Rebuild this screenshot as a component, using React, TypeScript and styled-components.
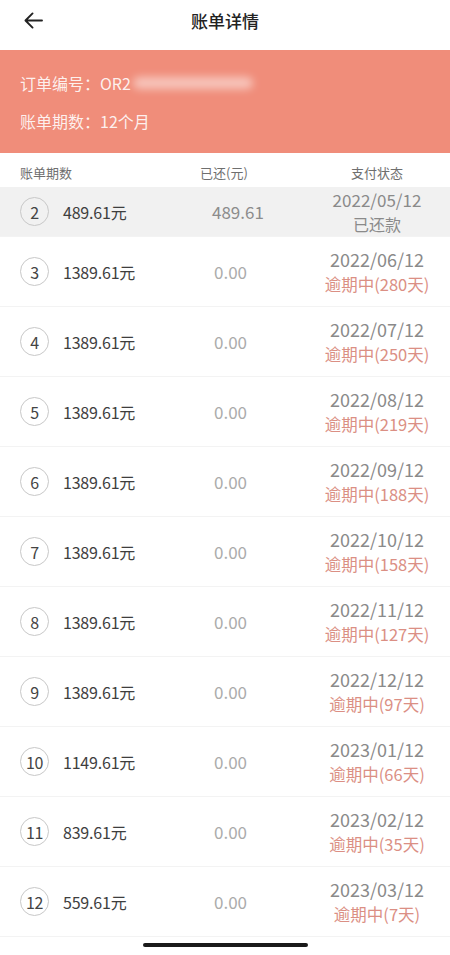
import React from "react";
import styled, { createGlobalStyle } from "styled-components";

const GlobalStyle = createGlobalStyle`
  html, body {
    margin: 0;
    padding: 0;
    background: #ffffff;
  }
  body {
    font-family: "Noto Sans CJK SC", "Noto Sans", sans-serif;
  }
`;

const Page = styled.div`
  width: 450px;
  height: 955px;
  display: flex;
  flex-direction: column;
  overflow: hidden;
  background: #ffffff;
`;

const NavBar = styled.div`
  height: 50px;
  display: grid;
  grid-template-columns: 60px 1fr 60px;
  align-items: center;
  padding-bottom: 10px;
  box-sizing: border-box;
`;

const BackButton = styled.div`
  display: flex;
  align-items: center;
  padding-left: 24px;
  color: #222;
`;

const Title = styled.div`
  text-align: center;
  font-size: 17px;
  font-weight: 500;
  color: #222;
`;

const Banner = styled.div`
  height: 103px;
  background: #f08d7a;
  display: flex;
  flex-direction: column;
  justify-content: center;
  gap: 16px;
  padding: 0 20px;
  box-sizing: border-box;
`;

const BannerLine = styled.div`
  font-size: 16px;
  color: rgba(255, 255, 255, 0.88);
  display: flex;
  align-items: center;
  height: 22px;
`;

const Blurred = styled.span`
  display: inline-block;
  width: 120px;
  height: 12px;
  margin-left: 2px;
  background: rgba(255, 255, 255, 0.5);
  filter: blur(4px);
  border-radius: 6px;
`;

const Columns = styled.div`
  display: grid;
  grid-template-columns: 180px 1fr 118px;
  align-items: center;
  height: 34px;
  padding: 4px 14px 0 20px;
  font-size: 13px;
  color: #6f6f6f;
  box-sizing: border-box;
`;

const StatusHead = styled.div`
  text-align: center;
`;

const Viewport = styled.div`
  flex: 1;
  overflow: hidden;
  position: relative;
`;

const Row = styled.div<{ $paid?: boolean }>`
  height: ${(p) => (p.$paid ? "50px" : "70px")};
  display: grid;
  grid-template-columns: 180px 1fr 118px;
  align-items: center;
  padding: 0 14px 0 20px;
  box-sizing: border-box;
  background: ${(p) => (p.$paid ? "#f1f1f1" : "#ffffff")};
  border-bottom: 1px solid #f3f3f3;
`;

const Period = styled.div`
  display: flex;
  align-items: center;
  gap: 14px;
`;

const Badge = styled.div`
  width: 29px;
  height: 29px;
  border-radius: 50%;
  border: 1px solid #c8c8c8;
  box-sizing: border-box;
  display: flex;
  align-items: center;
  justify-content: center;
  font-size: 16px;
  color: #444;
  letter-spacing: -0.5px;
`;

const Amount = styled.div`
  font-size: 16px;
  color: #3e3e3e;
  letter-spacing: -0.2px;
`;

const Repaid = styled.div<{ $paid?: boolean }>`
  font-size: 17px;
  color: ${(p) => (p.$paid ? "#8c8c8c" : "#ababab")};
  padding-left: ${(p) => (p.$paid ? "12px" : "14px")};
`;

const Status = styled.div<{ $paid?: boolean }>`
  display: flex;
  flex-direction: column;
  align-items: center;
  line-height: ${(p) => (p.$paid ? "24px" : "25px")};
`;

const DateText = styled.div<{ $paid?: boolean }>`
  font-size: ${(p) => (p.$paid ? "17px" : "18px")};
  color: #8a8a8a;
`;

const StateText = styled.div<{ $paid?: boolean }>`
  font-size: ${(p) => (p.$paid ? "16px" : "16.5px")};
  color: ${(p) => (p.$paid ? "#8a8a8a" : "#db8f84")};
`;

const HomeBar = styled.div`
  position: absolute;
  left: 143px;
  bottom: 8px;
  width: 165px;
  height: 4px;
  border-radius: 2px;
  background: #1a1a1a;
`;

type Bill = {
  no: number;
  amount: string;
  repaid: string;
  date: string;
  state: string;
  paid?: boolean;
};

const bills: Bill[] = [
  { no: 2, amount: "489.61元", repaid: "489.61", date: "2022/05/12", state: "已还款", paid: true },
  { no: 3, amount: "1389.61元", repaid: "0.00", date: "2022/06/12", state: "逾期中(280天)" },
  { no: 4, amount: "1389.61元", repaid: "0.00", date: "2022/07/12", state: "逾期中(250天)" },
  { no: 5, amount: "1389.61元", repaid: "0.00", date: "2022/08/12", state: "逾期中(219天)" },
  { no: 6, amount: "1389.61元", repaid: "0.00", date: "2022/09/12", state: "逾期中(188天)" },
  { no: 7, amount: "1389.61元", repaid: "0.00", date: "2022/10/12", state: "逾期中(158天)" },
  { no: 8, amount: "1389.61元", repaid: "0.00", date: "2022/11/12", state: "逾期中(127天)" },
  { no: 9, amount: "1389.61元", repaid: "0.00", date: "2022/12/12", state: "逾期中(97天)" },
  { no: 10, amount: "1149.61元", repaid: "0.00", date: "2023/01/12", state: "逾期中(66天)" },
  { no: 11, amount: "839.61元", repaid: "0.00", date: "2023/02/12", state: "逾期中(35天)" },
  { no: 12, amount: "559.61元", repaid: "0.00", date: "2023/03/12", state: "逾期中(7天)" },
];

const BackArrow = () => (
  <svg width="19" height="17" viewBox="0 0 20 18" fill="none">
    <path
      d="M19 9H2M9 1.5L1.5 9 9 16.5"
      stroke="currentColor"
      strokeWidth="2"
      strokeLinecap="round"
      strokeLinejoin="round"
    />
  </svg>
);

export default function App() {
  return (
    <Page>
      <GlobalStyle />
      <NavBar>
        <BackButton>
          <BackArrow />
        </BackButton>
        <Title>账单详情</Title>
        <div />
      </NavBar>
      <Banner>
        <BannerLine>
          订单编号：OR2
          <Blurred />
        </BannerLine>
        <BannerLine>账单期数：12个月</BannerLine>
      </Banner>
      <Columns>
        <div>账单期数</div>
        <div>已还(元)</div>
        <StatusHead>支付状态</StatusHead>
      </Columns>
      <Viewport>
        {bills.map((b) => (
          <Row key={b.no} $paid={b.paid}>
            <Period>
              <Badge>{b.no}</Badge>
              <Amount>{b.amount}</Amount>
            </Period>
            <Repaid $paid={b.paid}>{b.repaid}</Repaid>
            <Status $paid={b.paid}>
              <DateText $paid={b.paid}>{b.date}</DateText>
              <StateText $paid={b.paid}>{b.state}</StateText>
            </Status>
          </Row>
        ))}
        <HomeBar />
      </Viewport>
    </Page>
  );
}
